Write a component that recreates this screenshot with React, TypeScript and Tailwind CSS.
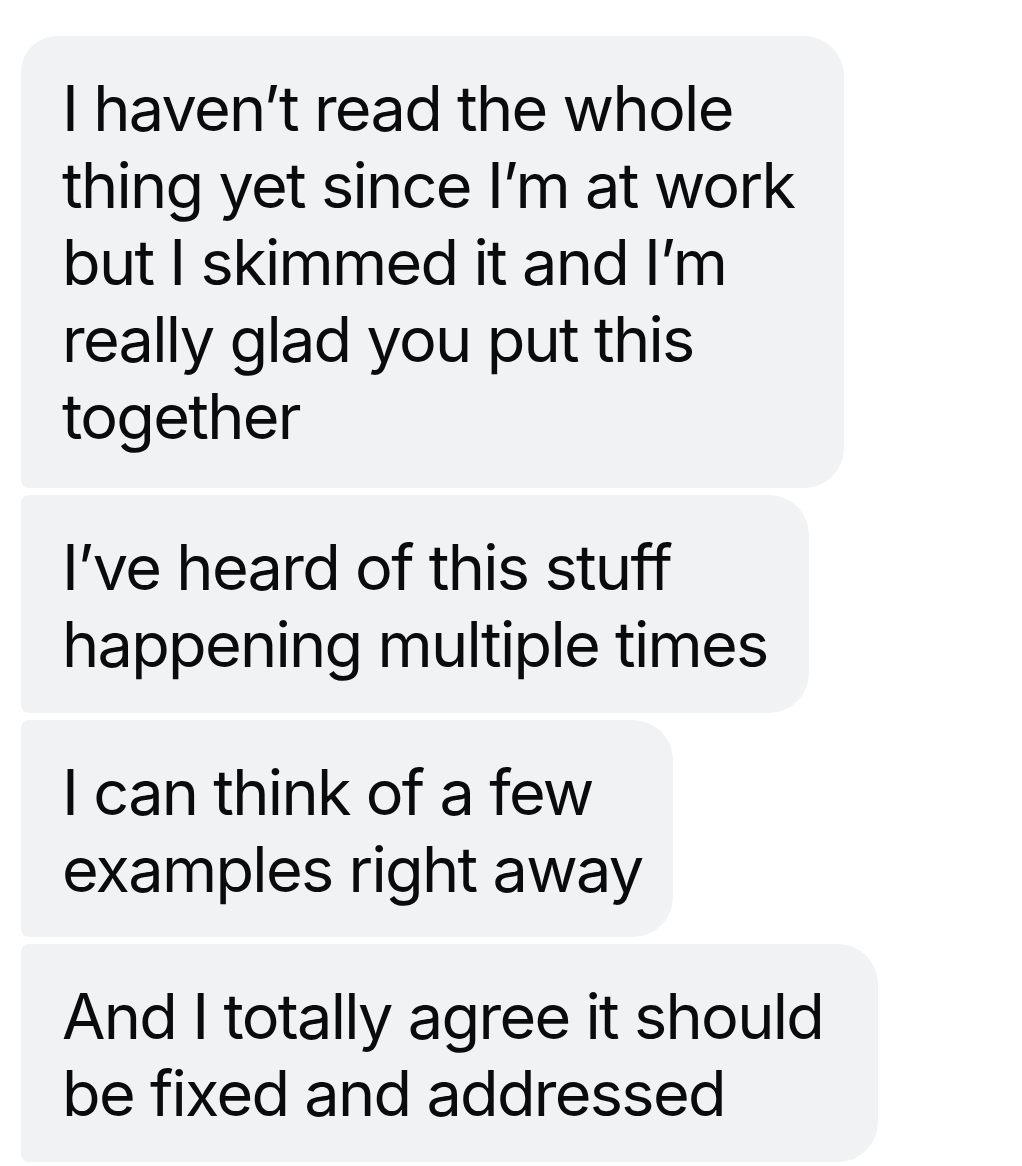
import React from 'react'

const messages = [
  {
    lines: ["I haven\u2019t read the whole", "thing yet since I\u2019m at work", "but I skimmed it and I\u2019m", "really glad you put this", "together"],
    className: 'w-[823px] h-[452px] rounded-tl-[36px] rounded-bl-[8px]',
  },
  {
    lines: ["I\u2019ve heard of this stuff", 'happening multiple times'],
    className: 'w-[788px] h-[218px] rounded-tl-[8px] rounded-bl-[8px]',
  },
  {
    lines: ['I can think of a few', 'examples right away'],
    className: 'w-[652px] h-[217px] rounded-tl-[8px] rounded-bl-[8px]',
  },
  {
    lines: ['And I totally agree it should', 'be fixed and addressed'],
    className: 'w-[857px] h-[218px] rounded-tl-[8px] rounded-bl-[8px]',
  },
]

export default function App() {
  return (
    <div className="w-[1022px] h-[1166px] bg-white overflow-hidden pt-[36px] pl-[21px] flex flex-col gap-[7px] font-['Inter',sans-serif]">
      {messages.map((m, i) => (
        <div
          key={i}
          className={`bg-[#f1f2f4] rounded-tr-[40px] rounded-br-[40px] pl-[41px] pt-[34px] text-[#0b0b0c] text-[63px] leading-[77px] tracking-[-1.7px] ${m.className}`}
        >
          {m.lines.map((l, j) => (
            <div key={j} className="whitespace-nowrap">{l}</div>
          ))}
        </div>
      ))}
    </div>
  )
}
